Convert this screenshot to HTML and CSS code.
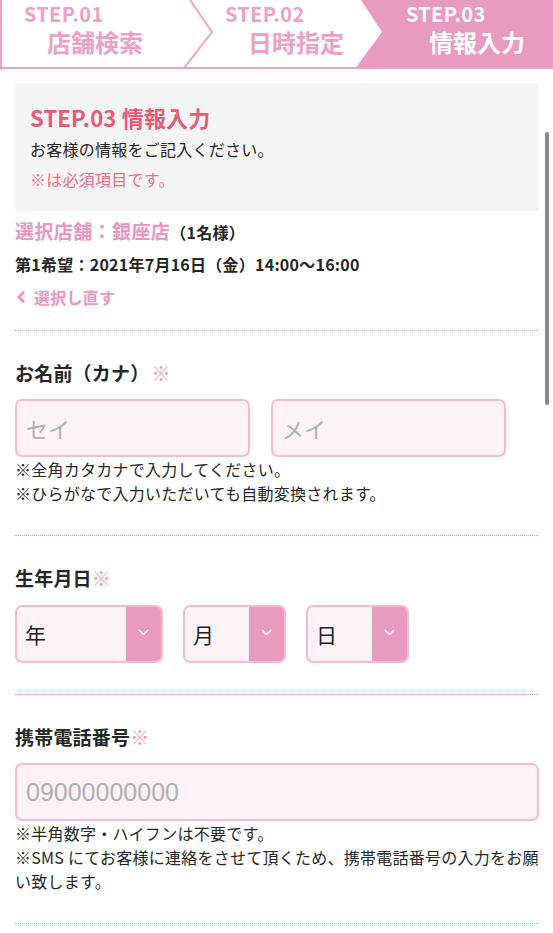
FILE: index.html
```html
<!DOCTYPE html>
<html lang="ja">
<head>
<meta charset="utf-8">
<title>STEP.03 情報入力</title>
<link rel="stylesheet" href="styles.css">
</head>
<body>
<nav class="steps">
  <svg class="steps-bg" viewBox="0 0 553 69" width="553" height="69" aria-hidden="true">
    <polygon points="361,0 553,0 553,69 355,69 382,32" fill="#e99abf"/>
    <polyline points="190,0 212,32 184,68" fill="none" stroke="#eea3c6" stroke-width="2"/>
    <line x1="1" y1="0" x2="1" y2="69" stroke="#eea3c6" stroke-width="2"/>
    <line x1="0" y1="68" x2="553" y2="68" stroke="#eea3c6" stroke-width="2"/>
  </svg>
  <div class="step step-1">
    <div class="step-no">STEP.01</div>
    <div class="step-name">店舗検索</div>
  </div>
  <div class="step step-2">
    <div class="step-no">STEP.02</div>
    <div class="step-name">日時指定</div>
  </div>
  <div class="step step-3 is-current">
    <div class="step-no">STEP.03</div>
    <div class="step-name">情報入力</div>
  </div>
</nav>

<main class="page">
  <section class="intro">
    <h1 class="intro-title">STEP.03 情報入力</h1>
    <p class="intro-text">お客様の情報をご記入ください。</p>
    <p class="intro-req">※は必須項目です。</p>
  </section>

  <section class="booking">
    <p class="shop"><span class="shop-name">選択店舗：銀座店</span><span class="shop-count">（1名様）</span></p>
    <p class="date">第1希望：2021年7月16日（金）14:00〜16:00</p>
    <a class="back" href="#">
      <svg class="back-icon" viewBox="0 0 10 14" width="10" height="14" aria-hidden="true"><polyline points="8,1.8 3,7 8,12.2" fill="none" stroke="#ee94c0" stroke-width="3"/></svg>
      選択し直す
    </a>
  </section>

  <section class="field">
    <h2 class="field-label">お名前（カナ）<span class="req req-gap">※</span></h2>
    <div class="name-row">
      <input class="text-input name-input" type="text" placeholder="セイ">
      <input class="text-input name-input" type="text" placeholder="メイ">
    </div>
    <p class="note">※全角カタカナで入力してください。<br>※ひらがなで入力いただいても自動変換されます。</p>
  </section>

  <section class="field">
    <h2 class="field-label">生年月日<span class="req">※</span></h2>
    <div class="date-row">
      <div class="select select-year">
        <span class="select-value">年</span>
        <span class="select-arrow"><svg viewBox="0 0 11 7" width="11" height="7" aria-hidden="true"><polyline points="1,1 5.5,5.5 10,1" fill="none" stroke="#fff" stroke-width="1.5"/></svg></span>
      </div>
      <div class="select select-small">
        <span class="select-value">月</span>
        <span class="select-arrow"><svg viewBox="0 0 11 7" width="11" height="7" aria-hidden="true"><polyline points="1,1 5.5,5.5 10,1" fill="none" stroke="#fff" stroke-width="1.5"/></svg></span>
      </div>
      <div class="select select-small">
        <span class="select-value">日</span>
        <span class="select-arrow"><svg viewBox="0 0 11 7" width="11" height="7" aria-hidden="true"><polyline points="1,1 5.5,5.5 10,1" fill="none" stroke="#fff" stroke-width="1.5"/></svg></span>
      </div>
    </div>
  </section>

  <section class="field">
    <h2 class="field-label">携帯電話番号<span class="req">※</span></h2>
    <input class="text-input tel-input" type="tel" placeholder="09000000000">
    <p class="note">※半角数字・ハイフンは不要です。<br>※SMS にてお客様に連絡をさせて頂くため、携帯電話番号の入力をお願い致します。</p>
  </section>
  <div class="field field-end"></div>
</main>

<div class="scrollbar" aria-hidden="true"></div>
</body>
</html>
```

FILE: styles.css
```css
* { box-sizing: border-box; }

html, body {
  margin: 0;
  padding: 0;
  background: #fff;
}

body {
  font-family: "Noto Sans CJK JP", "Noto Sans", sans-serif;
  color: #262626;
  font-size: 16px;
  letter-spacing: 0.25px;
  overflow: hidden;
}

/* ---------- step bar ---------- */
.steps {
  position: relative;
  display: flex;
  height: 69px;
}

.steps-bg {
  position: absolute;
  left: 0;
  top: 0;
}

.step {
  position: relative;
  padding-top: 2px;
  padding-left: 24px;
  color: #ee9fc4;
  font-weight: 700;
}

.step-1 { width: 201px; }
.step-2 { width: 181px; }
.step-3 { flex: 1; padding-left: 24px; }
.step.is-current { color: #fff; }

.step-no {
  font-size: 20px;
  line-height: 24px;
  letter-spacing: 0.3px;
}

.step-name {
  margin-top: 1px;
  margin-left: 23px;
  font-size: 24px;
  line-height: 30px;
  letter-spacing: 0;
}

/* ---------- page ---------- */
.page {
  padding: 14px 14px 0 15px;
}

.intro {
  background: #f4f4f4;
  padding: 19px 15px 19px 15px;
}

.intro-title {
  margin: 0;
  font-size: 22px;
  line-height: 30px;
  font-weight: 700;
  color: #ea5a74;
  letter-spacing: 0.2px;
}

.intro-text {
  margin: 4px 0 0;
  line-height: 26px;
}

.intro-req {
  margin: 4px 0 0;
  line-height: 26px;
  color: #ee6f86;
}

.booking {
  padding: 6px 0 19px;
}

.shop {
  margin: 0;
  line-height: 28px;
  font-weight: 700;
}

.shop-name {
  color: #ee94c0;
  font-size: 19px;
  letter-spacing: 0.4px;
}

.shop-count {
  font-size: 16px;
}

.date {
  margin: 4px 0 0;
  line-height: 28px;
  font-weight: 700;
}

.back {
  display: flex;
  align-items: center;
  gap: 8px;
  margin-top: 5px;
  line-height: 28px;
  color: #ee94c0;
  font-weight: 700;
  text-decoration: none;
}

.back-icon { display: block; margin-left: 1px; margin-bottom: 1px; }

/* ---------- fields ---------- */
.field {
  border-top: 1px dotted #ec8fbd;
  padding: 28px 0 30px;
}

.field-end { padding: 0; }

.field-label {
  margin: 0;
  font-size: 19px;
  line-height: 28px;
  font-weight: 700;
  letter-spacing: 0.2px;
}

.req {
  color: #f293a8;
  font-weight: 400;
}

.req-gap { margin-left: 2px; }

.text-input {
  display: block;
  height: 58px;
  margin: 0;
  border: 2px solid #f6bad4;
  border-radius: 7px;
  background: #fdf2f6;
  padding: 0 9px;
  font-family: "Noto Sans CJK JP", sans-serif;
  font-size: 22px;
  color: #262626;
  outline: none;
}

.text-input::placeholder { color: #b0b0b0; }

.name-row {
  display: flex;
  gap: 21px;
  margin-top: 12px;
}

.name-input { width: 235px; }

.tel-input {
  width: 100%;
  margin-top: 12px;
  font-family: "Liberation Sans", Arial, sans-serif;
  font-size: 25px;
  letter-spacing: 0;
}

.note {
  margin: 0;
  line-height: 24px;
}

/* ---------- selects ---------- */
.date-row {
  display: flex;
  gap: 20px;
  margin-top: 13px;
  padding-bottom: 1px;
}

.select {
  display: flex;
  height: 58px;
  border: 2px solid #f6bad4;
  border-radius: 7px;
  background: #fdf2f6;
  overflow: hidden;
}

.select-year { width: 148px; }
.select-small { width: 103px; }

.select-value {
  flex: 1;
  display: flex;
  align-items: center;
  padding-left: 8px;
  font-size: 21px;
  color: #222;
}

.select-arrow {
  width: 35px;
  display: flex;
  align-items: center;
  justify-content: center;
  padding-bottom: 3px;
  background: #e99abf;
}

.select-arrow svg { display: block; }

/* ---------- overlay scrollbar ---------- */
.scrollbar {
  position: fixed;
  left: 545px;
  top: 132px;
  width: 4px;
  height: 273px;
  border-radius: 2px;
  background: #8a8a8a;
}
```
